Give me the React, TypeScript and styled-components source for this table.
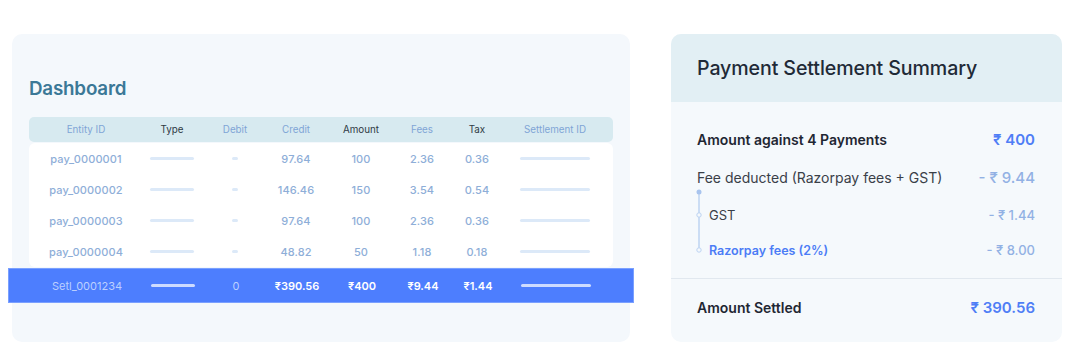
import React from "react";
import styled, { createGlobalStyle } from "styled-components";

const GlobalStyle = createGlobalStyle`
  html, body {
    margin: 0;
    padding: 0;
    background: #ffffff;
    font-family: Inter, "Noto Sans", "Liberation Sans", sans-serif;
  }
`;

const COLUMNS = "114px 58px 68px 54px 76px 46px 64px 92px";

const Page = styled.div`
  display: flex;
  align-items: flex-start;
  gap: 41px;
  padding: 34px 0 0 12px;
  width: 1080px;
  height: 343px;
  box-sizing: border-box;
`;

const DashboardCard = styled.section`
  width: 618px;
  height: 308px;
  box-sizing: border-box;
  padding: 42px 17px 0;
  background: #f4f8fc;
  border-radius: 10px;
  display: flex;
  flex-direction: column;
`;

const Title = styled.h1`
  margin: 0 0 16px;
  font-size: 18.8px;
  line-height: 25px;
  font-weight: 600;
  color: #3b7897;
  letter-spacing: -0.2px;
`;

const HeadRow = styled.div`
  display: grid;
  grid-template-columns: ${COLUMNS};
  align-items: center;
  height: 25px;
  background: #d7eaf0;
  border-radius: 5px;
`;

const HeadCell = styled.div<{ $dark?: boolean }>`
  text-align: center;
  font-size: 9.8px;
  color: ${(p) => (p.$dark ? "#2f3a44" : "#7fa5d6")};
`;

const Body = styled.div`
  margin-top: 1px;
  background: #ffffff;
  border-radius: 6px;
`;

const Row = styled.div`
  display: grid;
  grid-template-columns: ${COLUMNS};
  align-items: center;
  height: 31px;
`;

const Cell = styled.div`
  display: flex;
  justify-content: center;
  font-size: 11px;
  font-weight: 500;
  color: #8eaed8;
  letter-spacing: 0.1px;
`;

const Bar = styled.span<{ $w: number; $light?: boolean }>`
  display: block;
  width: ${(p) => p.$w}px;
  height: 3px;
  border-radius: 2px;
  background: ${(p) => (p.$light ? "#cddbff" : "#dce9f8")};
`;

const TotalRow = styled.div`
  display: grid;
  grid-template-columns: ${COLUMNS};
  align-items: center;
  height: 35px;
  margin: 1px -21px 0;
  padding: 0 21px;
  background: #4d7efe;
  border: 1px solid #7aa0ff;
  box-sizing: border-box;
`;

const TotalCell = styled.div<{ $dim?: boolean }>`
  display: flex;
  justify-content: center;
  font-size: 11px;
  font-weight: ${(p) => (p.$dim ? 400 : 600)};
  color: ${(p) => (p.$dim ? "#bcd0ff" : "#ffffff")};
`;

const SummaryCard = styled.section`
  width: 391px;
  height: 308px;
  border-radius: 10px;
  overflow: hidden;
  background: #f5f9fc;
  display: flex;
  flex-direction: column;
`;

const SummaryHeader = styled.div`
  height: 68px;
  flex-shrink: 0;
  display: flex;
  align-items: center;
  padding-left: 26px;
  background: #e2eff4;
`;

const SummaryTitle = styled.h2`
  margin: 0;
  font-size: 19.6px;
  font-weight: 500;
  color: #1f2a37;
  letter-spacing: -0.1px;
`;

const SummaryBody = styled.div`
  padding: 25px 27px 0 26px;
  display: flex;
  flex-direction: column;
`;

const Line = styled.div<{ $top?: number }>`
  display: flex;
  align-items: center;
  justify-content: space-between;
  height: 24px;
  margin-top: ${(p) => p.$top ?? 0}px;
`;

const Label = styled.span<{ $bold?: boolean; $small?: boolean; $accent?: boolean }>`
  font-size: ${(p) => (p.$small ? (p.$bold ? 12.5 : 13) : 14)}px;
  font-weight: ${(p) => (p.$bold ? 600 : 400)};
  color: ${(p) => (p.$accent ? "#4b7cf6" : p.$bold ? "#1f2733" : "#3a4048")};
`;

const Value = styled.span<{ $strong?: boolean; $small?: boolean }>`
  font-size: ${(p) => (p.$small ? 13 : 15)}px;
  font-weight: ${(p) => (p.$strong ? 600 : 500)};
  color: ${(p) => (p.$strong ? "#4f7ef6" : "#92b1e4")};
`;

const SubList = styled.div`
  display: flex;
  gap: 5px;
  margin-left: -3px;
`;

const SubItems = styled.div`
  flex: 1;
  display: flex;
  flex-direction: column;
`;

const Divider = styled.hr`
  border: 0;
  height: 1px;
  background: #e1e8ef;
  margin: 16px -27px 0 -26px;
`;

const Timeline = () => (
  <svg width="10" height="64" viewBox="0 0 10 64">
    <line x1="5" y1="3" x2="5" y2="59" stroke="#bcd3f2" strokeWidth="1.5" />
    <circle cx="5" cy="3" r="2.5" fill="#a8c4ee" />
    <circle cx="5" cy="26" r="2.2" fill="#f5f9fc" stroke="#bcd3f2" strokeWidth="1" />
    <circle cx="5" cy="61" r="2.2" fill="#f5f9fc" stroke="#bcd3f2" strokeWidth="1" />
  </svg>
);

const payments = [
  { id: "pay_0000001", credit: "97.64", amount: "100", fees: "2.36", tax: "0.36" },
  { id: "pay_0000002", credit: "146.46", amount: "150", fees: "3.54", tax: "0.54" },
  { id: "pay_0000003", credit: "97.64", amount: "100", fees: "2.36", tax: "0.36" },
  { id: "pay_0000004", credit: "48.82", amount: "50", fees: "1.18", tax: "0.18" },
];

const App = () => {
  return (
    <Page>
      <GlobalStyle />
      <DashboardCard>
        <Title>Dashboard</Title>
        <HeadRow>
          <HeadCell>Entity ID</HeadCell>
          <HeadCell $dark>Type</HeadCell>
          <HeadCell>Debit</HeadCell>
          <HeadCell>Credit</HeadCell>
          <HeadCell $dark>Amount</HeadCell>
          <HeadCell>Fees</HeadCell>
          <HeadCell $dark>Tax</HeadCell>
          <HeadCell>Settlement ID</HeadCell>
        </HeadRow>
        <Body>
          {payments.map((p) => (
            <Row key={p.id}>
              <Cell>{p.id}</Cell>
              <Cell>
                <Bar $w={44} />
              </Cell>
              <Cell>
                <Bar $w={6} />
              </Cell>
              <Cell>{p.credit}</Cell>
              <Cell>{p.amount}</Cell>
              <Cell>{p.fees}</Cell>
              <Cell>{p.tax}</Cell>
              <Cell>
                <Bar $w={70} />
              </Cell>
            </Row>
          ))}
        </Body>
        <TotalRow>
          <TotalCell $dim>Setl_0001234</TotalCell>
          <TotalCell>
            <Bar $w={44} $light />
          </TotalCell>
          <TotalCell $dim>0</TotalCell>
          <TotalCell>₹390.56</TotalCell>
          <TotalCell>₹400</TotalCell>
          <TotalCell>₹9.44</TotalCell>
          <TotalCell>₹1.44</TotalCell>
          <TotalCell>
            <Bar $w={70} $light />
          </TotalCell>
        </TotalRow>
      </DashboardCard>

      <SummaryCard>
        <SummaryHeader>
          <SummaryTitle>Payment Settlement Summary</SummaryTitle>
        </SummaryHeader>
        <SummaryBody>
          <Line>
            <Label $bold>Amount against 4 Payments</Label>
            <Value $strong>₹ 400</Value>
          </Line>
          <Line $top={14}>
            <Label>Fee deducted (Razorpay fees + GST)</Label>
            <Value>- ₹ 9.44</Value>
          </Line>
          <SubList>
            <Timeline />
            <SubItems>
              <Line $top={14}>
                <Label $small>GST</Label>
                <Value $small>- ₹ 1.44</Value>
              </Line>
              <Line $top={11}>
                <Label $small $bold $accent>
                  Razorpay fees (2%)
                </Label>
                <Value $small>- ₹ 8.00</Value>
              </Line>
            </SubItems>
          </SubList>
          <Divider />
          <Line $top={16}>
            <Label $bold>Amount Settled</Label>
            <Value $strong>₹ 390.56</Value>
          </Line>
        </SummaryBody>
      </SummaryCard>
    </Page>
  );
};

export default App;
